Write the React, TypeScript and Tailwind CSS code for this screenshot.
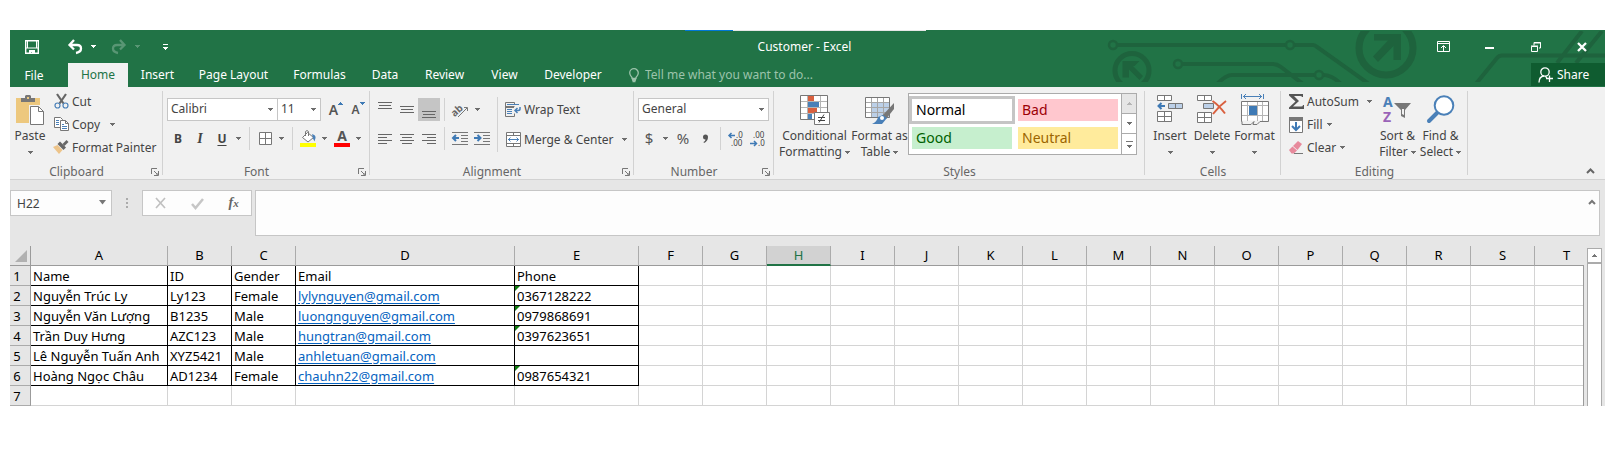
import React from "react";

type Kids = { children?: React.ReactNode };

function Icon({ w, h, children }: { w: number; h: number } & Kids) {
  return (
    <svg width={w} height={h} viewBox={`0 0 ${w} ${h}`} fill="none" className="block shrink-0 overflow-visible" aria-hidden="true">
      {children}
    </svg>
  );
}

function Caret({ className = "text-[#6d6d6d]" }: { className?: string }) {
  return (
    <svg width="5" height="3" viewBox="0 0 5 3" className={`block shrink-0 ${className}`} aria-hidden="true">
      <path d="M0 0h5v1H4v1H3v1H2V2H1V1H0z" fill="currentColor" />
    </svg>
  );
}

function Tool({ label, className, children }: { label: string; className: string } & Kids) {
  return (
    <button type="button" aria-label={label} title={label} className={`flex h-[23px] shrink-0 items-center justify-center ${className}`}>
      {children}
    </button>
  );
}

function Divider({ className = "" }: { className?: string }) {
  return <span className={`w-px shrink-0 bg-[#d2d2d2] ${className}`} />;
}

function Group({ name, width, launcher, children }: { name: string; width: string; launcher?: boolean } & Kids) {
  return (
    <section aria-label={name} className={`relative flex shrink-0 flex-col ${width}`}>
      <div className="flex h-[74px]">{children}</div>
      <div className="flex h-[18px] items-center pt-[3px] text-center text-[12px] leading-4 text-[#666]">
        <h2 className="flex-1">{name}</h2>
        {launcher && (
          <button type="button" aria-label={`${name} settings`} className="w-5 pl-[8px]">
            <Icon w={8} h={8}>
              <path d="M.5 6V.5H6M3 3l3 3M7.5 3v4.5H3M7 5v2H5" stroke="#777" />
            </Icon>
          </button>
        )}
      </div>
      <span className="absolute top-[4px] right-0 bottom-[4px] w-px bg-[#d2d2d2]" />
    </section>
  );
}

function Big({ icon, lines, width }: { icon: React.ReactNode; lines: string[]; width: string }) {
  return (
    <button type="button" className={`flex shrink-0 flex-col items-center pt-[8px] text-[12px] leading-4 whitespace-nowrap text-[#444] ${width}`}>
      <span className="flex h-[33px] items-start">{icon}</span>
      <span>{lines[0]}</span>
      <span className="flex h-4 items-center gap-[3px]">
        {lines[1]}
        <Caret />
      </span>
    </button>
  );
}

function Small({ icon, text, caret, gap = "ml-[4px]" }: { icon: React.ReactNode; text: string; caret?: boolean; gap?: string }) {
  return (
    <button type="button" className="flex h-[23px] items-center text-[12px] whitespace-nowrap text-[#444]">
      <span className="mr-[3px] flex w-4 justify-center">{icon}</span>
      {text}
      {caret && (
        <span className={gap}>
          <Caret />
        </span>
      )}
    </button>
  );
}

function Combo({ label, value, options, className }: { label: string; value: string; options: string[]; className: string }) {
  return (
    <div className={`relative shrink-0 ${className}`}>
      <select aria-label={label} defaultValue={value} className="block h-[23px] w-full appearance-none border border-[#c6c6c6] bg-white pb-[2px] pl-[3px] text-[12px] leading-4 text-[#444]">
        {options.map((o) => (
          <option key={o}>{o}</option>
        ))}
      </select>
      <span className="pointer-events-none absolute top-[10px] right-[5px]">
        <Caret />
      </span>
    </div>
  );
}

/* ---------- icons ---------- */

const PasteIcon = () => (
  <Icon w={28} h={30}>
    <path d="M0 3h24v25H0z" fill="#edc87e" />
    <path d="M5 3h4V1l1-1h4l1 1v2h4v4H5z" fill="#777" />
    <path d="M11 2h2v2h-2z" fill="#edc87e" />
    <path d="M13 10h11v20H13z" fill="#f1f1f1" />
    <path d="M14.500 11.500h8l5 5v13h-13z" fill="#fff" stroke="#777" />
    <path d="M22.500 11.500v5h5" stroke="#777" />
  </Icon>
);

const CutIcon = () => (
  <Icon w={15} h={15}>
    <path d="M3 0l6.500 9.500M12 0L5.500 9.500" stroke="#666" strokeWidth="2.200" />
    <circle cx="3.500" cy="11.500" r="2.500" stroke="#4a80b8" strokeWidth="1.200" />
    <circle cx="11.500" cy="11.500" r="2.500" stroke="#4a80b8" strokeWidth="1.200" />
  </Icon>
);

const CopyIcon = () => (
  <Icon w={15} h={15}>
    <path d="M.5.500h6l2 2v8h-8z" fill="#fff" stroke="#777" />
    <path d="M2 3.500h3M2 5.500h3M2 7.500h3" stroke="#4a80b8" />
    <path d="M6.500 3.500h5l3 3v7h-8z" fill="#fff" stroke="#777" />
    <path d="M11.500 3.500v3h3" stroke="#777" />
    <path d="M8 7.500h2M8 9.500h5M8 11.500h5" stroke="#4a80b8" />
  </Icon>
);

const PainterIcon = () => (
  <Icon w={16} h={15}>
    <path d="M0 7l4.500-2 5 5L6 14z" fill="#edc48a" />
    <path d="M4.500 4l2.500-2.500 6 6-2.500 2.500z" fill="#666" />
    <path d="M10.500 5l4-4" stroke="#666" strokeWidth="2.800" />
  </Icon>
);

const LinesIcon = ({ rows, h = 14 }: { rows: [number, number, number][]; h?: number }) => (
  <Icon w={14} h={h}>
    {rows.map(([x, y, w]) => (
      <rect key={y} x={x} y={y} width={w} height="1" fill="#666" />
    ))}
  </Icon>
);

const BordersIcon = () => (
  <Icon w={13} h={13}>
    <path d="M.5.500h12v12H.5zM6.500 0v13M0 6.500h13" stroke="#777" fill="#fff" />
  </Icon>
);

const FillColorIcon = () => (
  <Icon w={17} h={17}>
    <path d="M2.500 7.500l5-5 6 5-5.500 4.500z" fill="#fff" stroke="#777" />
    <path d="M5.500 6V1.500q1.500-2 3 0V6" stroke="#777" />
    <path d="M12 4q4 1 3.500 4l-1 3.500-1.500-3z" fill="#4a80b8" />
    <path d="M0 13h16v4H0z" fill="#ff0" />
  </Icon>
);

const OrientationIcon = () => (
  <Icon w={17} h={16}>
    <text x="-1" y="12" transform="rotate(-42 5 9)" fontSize="10" fontWeight="bold" fill="#666" fontFamily="Noto Sans, sans-serif">ab</text>
    <path d="M6 15l9-9M15.500 9V5.500H12" stroke="#777" />
  </Icon>
);

const IndentIcon = ({ inc }: { inc?: boolean }) => (
  <Icon w={16} h={13}>
    <path d="M0 .5h16M9 3.500h7M9 6.500h7M9 9.500h7M0 12.500h16" stroke="#777" />
    {inc ? (
      <path d="M0 6h6M3.500 3l3 3-3 3" stroke="#3f7ab5" strokeWidth="2" />
    ) : (
      <path d="M7 6H1M4 3L1 6l3 3" stroke="#3f7ab5" strokeWidth="2" />
    )}
  </Icon>
);

const WrapIcon = () => (
  <Icon w={16} h={16}>
    <path d="M9.500 2V.500h-9v4h9M.5 5.500v9h9v-3M.5 4v2M9 5.500H.5" stroke="#777" />
    <path d="M2 2.500h12M2 7.500h5M2 9.500h5M2 11.500h5" stroke="#4a80b8" />
    <path d="M15 5v2q0 1.500-2 1.500h-3M12.500 6l-2.500 2.500 2.500 2.500" stroke="#4a80b8" strokeWidth="1.500" />
  </Icon>
);

const MergeIcon = () => (
  <Icon w={15} h={15}>
    <path d="M.5.500h14v14H.5zM.5 3.500h14M.5 11.500h14M7.500 0v3.500M7.500 11.500V15" stroke="#777" fill="#fff" />
    <path d="M2 7.500h11M4.500 5.500l-2 2 2 2M10.500 5.500l2 2-2 2" stroke="#4a80b8" />
  </Icon>
);

const DecimalIcon = ({ dec }: { dec?: boolean }) => (
  <Icon w={16} h={14}>
    <g fontSize="8" fontFamily="Noto Sans, sans-serif" fill="#444">
      <text x={dec ? 3 : 8} y="6">{dec ? ".00" : ".0"}</text>
      <text x={dec ? 8 : 3} y="14">{dec ? ".0" : ".00"}</text>
    </g>
    {dec ? (
      <path d="M0 11.500h6M4 9l2.500 2.500L4 14" stroke="#3f7ab5" strokeWidth="1.500" />
    ) : (
      <path d="M7 3.500H1M3.500 1L1 3.500 3.500 6" stroke="#3f7ab5" strokeWidth="1.500" />
    )}
  </Icon>
);

const ConditionalIcon = () => (
  <Icon w={30} h={30}>
    <path d="M.5.500h27v24H.5z" fill="#fff" />
    <path d="M8 1h6v5H8zM8 13h9v5H8z" fill="#d9603f" />
    <path d="M8 19h4v5H8z" fill="#4a80b8" />
    <path d="M0 6.500h28M0 12.500h28M0 18.500h28M7.500 0v25M20.500 0v25" stroke="#b5b5b5" />
    <path d="M8 7h11v5H8z" fill="#4a80b8" />
    <path d="M.5.500h27v24H.5z" stroke="#777" />
    <path d="M14.500 17.500h15v12h-15z" fill="#fff" stroke="#777" />
    <path d="M18 22.500h7M18 25.500h7M24 19.500l-5 8" stroke="#444" />
  </Icon>
);

const TableIcon = () => (
  <Icon w={30} h={30}>
    <path d="M.5 2.500h24v20H.5z" fill="#fff" />
    <path d="M7 8h18v15H7z" fill="#bcd0e8" />
    <path d="M0 7.500h25M0 12.500h25M0 17.500h25M6.500 3v20M12.500 3v20M18.500 3v20" stroke="#a6a6a6" />
    <path d="M.5 2.500h24v20H.5z" stroke="#777" />
    <path d="M29 8v6L21 24l-4-3z" fill="#777" />
    <path d="M18 20l4 3-5 6H7q5-2 6-7z" fill="#4a80b8" />
    <circle cx="17" cy="23" r="2" fill="#fff" />
  </Icon>
);

const InsertCellsIcon = () => (
  <Icon w={26} h={27}>
    <path d="M.5.500h14v5H.5zM7.500.500v5M.5 16.500h14v10H.5zM7.500 16v11M.5 21.500h14" fill="#fff" stroke="#777" />
    <path d="M11.500 8.500h14v5h-14zM18.500 8.500v5" fill="#bcd0e8" stroke="#777" />
    <path d="M8 11H2M4.500 8l-3 3 3 3" stroke="#3f7ab5" strokeWidth="2" />
  </Icon>
);

const DeleteCellsIcon = () => (
  <Icon w={30} h={28}>
    <path d="M.5.500h14v5H.5zM7.500.500v5M.5 17.500h14v10H.5zM7.500 17v11M.5 22.500h14" fill="#fff" stroke="#777" />
    <path d="M6.500 8.500h10v5h-10z" fill="#bcd0e8" stroke="#777" />
    <path d="M15.500 6q6 4 12.500 12.500M29 6q-7 5-13 13" stroke="#d9603f" strokeWidth="2" />
  </Icon>
);

const FormatCellsIcon = () => (
  <Icon w={28} h={31}>
    <path d="M.5-1v5M22.500-1v5M2 1.500h19M5-1L2.500 1.500 5 4M18-1l2.500 2.500L18 4" stroke="#4a80b8" />
    <path d="M.5 6.500h27v19H.5z" fill="#fff" />
    <path d="M0 10.500h28M0 20.500h28M6.500 6v20M16.500 6v20M21.500 6v20" stroke="#b5b5b5" />
    <path d="M.5 6.500h27v20H19l-3 3h-4l1-3-3 3H1v-3H.5z" stroke="#777" />
    <path d="M8 11h8v9H8z" fill="#3f7ab5" />
  </Icon>
);

const SigmaIcon = () => (
  <Icon w={15} h={15}>
    <path d="M0 0h14v3h-1q0-1-2-1H5l5 5-6 5.500h8q2 0 2-1.500h1v4H0v-1.500L6.500 7.500 0 1.500z" fill="#555" />
  </Icon>
);

const FillIcon = () => (
  <Icon w={14} h={16}>
    <path d="M.5.500h13v15H.5z" fill="#fff" stroke="#777" />
    <path d="M0 0h14v4H0z" fill="#777" />
    <path d="M7 5v8M3 9l4 4 4-4" stroke="#3f7ab5" strokeWidth="2" />
  </Icon>
);

const EraserIcon = () => (
  <Icon w={14} h={13}>
    <path d="M0 9l3.500-3.500 4.500 4L5 12.500H2.500z" fill="#e78a9c" />
    <path d="M4 5l5-5 4 3-4.500 6z" fill="#e78a9c" />
    <path d="M5 12.500h9" stroke="#777" />
  </Icon>
);

const SortIcon = () => (
  <Icon w={29} h={28}>
    <g fontSize="14" fontWeight="bold" fontFamily="Noto Sans, sans-serif">
      <text x="0" y="12" fill="#4a80b8">A</text>
      <text x="0" y="27" fill="#9a63b8">Z</text>
    </g>
    <path d="M11 8h17l-6 7v8l-4-2v-6z" fill="#777" />
    <path d="M19 14h2v6l-2-1z" fill="#f1f1f1" />
  </Icon>
);

const FindIcon = () => (
  <Icon w={28} h={28}>
    <path d="M2 26l9-9" stroke="#4a80b8" strokeWidth="4" strokeLinecap="round" />
    <circle cx="17" cy="10.500" r="9.300" fill="#fff" stroke="#4a80b8" strokeWidth="2" />
  </Icon>
);

function Circuit() {
  return (
    <svg width="500" height="51" viewBox="0 0 500 51" fill="none" className="pointer-events-none absolute top-px right-0" aria-hidden="true">
      <g stroke="#1e633d" strokeWidth="4">
        <circle cx="8" cy="14" r="4" strokeWidth="2.500" />
        <path d="M12 14h169M189 14h19q2 0 4 2l52 37" />
        <circle cx="185" cy="14" r="4" strokeWidth="2.500" />
        <circle cx="73" cy="33" r="4" strokeWidth="2.500" />
        <path d="M77 33h91q4 0 8 3l22 17M112 53q9-9 15-9h83M218 44q9 0 18 9" />
        <circle cx="214" cy="44" r="4" strokeWidth="2.500" />
        <circle cx="27" cy="39.500" r="17" strokeWidth="5" />
        <circle cx="281" cy="17" r="27" strokeWidth="7" />
        <path d="M370 54l22-27q2-2.500 5-2.500h103M477 0l-25 32M497 0l-26 32" />
      </g>
      <path d="M17.500 30h17l-5 5h-1.500l10 10-3.500 4L24 38.500v8h-6.500z" fill="#1e633d" />
      <path d="M269 3h27v26h-7.500V15L273 31l-5-5.500 15-16h-14z" fill="#1e633d" />
    </svg>
  );
}

/* ---------- title bar and tabs ---------- */

function TitleBar() {
  return (
    <div className="grid h-[33px] grid-cols-[1fr_auto_1fr] items-center text-white">
      <div className="flex items-center pl-[15px]">
        <button type="button" aria-label="Save">
          <Icon w={14} h={14}>
            <path d="M.7.700h12.600v12.600H.700z" stroke="#fff" strokeWidth="1.400" />
            <path d="M0 7.500h14v1H0zM2 0h1v8H2zM11 0h1v8h-1zM4 10h6v4H7v-2H6v2H4z" fill="#fff" />
          </Icon>
        </button>
        <button type="button" aria-label="Undo" className="ml-[29px]">
          <Icon w={14} h={14}>
            <path d="M1.500 5H9q4 0 4 3.500T8 13M6 0L1.500 5l4.500 4.500" stroke="#fff" strokeWidth="2.300" />
          </Icon>
        </button>
        <button type="button" aria-label="Undo history" className="ml-[9px]">
          <Caret className="text-white" />
        </button>
        <button type="button" aria-label="Redo" className="ml-4 opacity-25">
          <Icon w={14} h={14}>
            <path d="M12.500 5H5Q1 5 1 8.500T6 13M8 0l4.500 5L8 9.500" stroke="#fff" strokeWidth="2.300" />
          </Icon>
        </button>
        <button type="button" aria-label="Redo history" className="ml-[9px] opacity-25">
          <Caret className="text-white" />
        </button>
        <button type="button" aria-label="Customize Quick Access Toolbar" className="ml-[23px]">
          <Icon w={5} h={6}>
            <path d="M0 0h5v1H0zM0 3h5v1H4v1H3v1H2V5H1V4H0z" fill="#fff" />
          </Icon>
        </button>
      </div>
      <h1 className="pr-[6px] text-[12px]">Customer - Excel</h1>
      <div className="flex h-[30px] items-center justify-end pr-[18px]">
        <button type="button" aria-label="Ribbon Display Options">
          <Icon w={13} h={11}>
            <path d="M.5.500h12v10H.5zM.5 2.500h12M6.500 5v5M4 7l2.500-2.500L9 7" stroke="#fff" />
          </Icon>
        </button>
        <button type="button" aria-label="Minimize" className="ml-[35px] pt-[3px]">
          <Icon w={9} h={2}>
            <path d="M0 0h9v2H0z" fill="#fff" />
          </Icon>
        </button>
        <button type="button" aria-label="Restore" className="ml-[37px]">
          <Icon w={10} h={10}>
            <path d="M.5 4.500h6v5h-6zM0 4h7M3 3.500V.500h6.500V6H8M3 1h7" stroke="#fff" />
          </Icon>
        </button>
        <button type="button" aria-label="Close" className="ml-[36px]">
          <Icon w={10} h={10}>
            <path d="M1 1l8 8M9 1L1 9" stroke="#fff" strokeWidth="2.300" />
          </Icon>
        </button>
      </div>
    </div>
  );
}

const tabs: [string, string][] = [
  ["File", "w-[58px] pr-[10px] pt-[2px]"],
  ["Home", "w-[60px]"],
  ["Insert", "w-[59px]"],
  ["Page Layout", "w-[93px]"],
  ["Formulas", "w-[79px]"],
  ["Data", "w-[52px]"],
  ["Review", "w-[67px]"],
  ["View", "w-[53px]"],
  ["Developer", "w-[84px]"],
];

function Tabs() {
  return (
    <nav className="relative flex h-6 items-stretch text-[12px] text-white">
      {tabs.map(([t, w]) => (
        <button key={t} type="button" className={`shrink-0 whitespace-nowrap ${w} ${t === "Home" ? "bg-[#f1f1f1] text-[#217346]" : ""}`}>
          {t}
        </button>
      ))}
      <label className="ml-[14px] flex items-center gap-[6px]">
        <Icon w={10} h={14}>
          <path d="M3 9.500Q.700 7 .700 5a4.300 4.300 0 0 1 8.600 0Q9.300 7 7 9.500v1H3zM3 12h4M3.500 13.500h3" stroke="#9cc3ab" strokeWidth="1.300" />
        </Icon>
        <input aria-label="Tell me" placeholder="Tell me what you want to do..." className="w-[180px] bg-transparent placeholder:text-[#9cc3ab] placeholder:opacity-100" />
      </label>
      <button type="button" className="ml-auto flex h-[23px] w-[74px] items-center gap-1 bg-[#0f5c30] pl-[7px]">
        <Icon w={15} h={16}>
          <circle cx="7" cy="5" r="4.200" stroke="#fff" strokeWidth="1.300" />
          <path d="M1 15.500q0-6 5-6.500M7 9.500l2 1M11.500 8.500V15M8 11.500h7" stroke="#fff" strokeWidth="1.300" />
        </Icon>
        Share
      </button>
    </nav>
  );
}

/* ---------- ribbon ---------- */

function Ribbon() {
  return (
    <div className="flex h-[93px] border-b border-[#d2d2d2] bg-[#f1f1f1]">
      <Group name="Clipboard" width="w-[153px]" launcher>
        <Big icon={<PasteIcon />} lines={["Paste"]} width="w-[40px]" />
        <div className="ml-[3px] flex flex-col pt-[3px]">
          <Small icon={<CutIcon />} text="Cut" />
          <Small icon={<CopyIcon />} text="Copy" caret gap="ml-[10px]" />
          <Small icon={<PainterIcon />} text="Format Painter" />
        </div>
      </Group>

      <Group name="Font" width="w-[207px]" launcher>
        <div className="flex flex-col gap-[6px] pt-[11px] pl-[4px]">
          <div className="flex">
            <Combo label="Font name" value="Calibri" options={["Calibri", "Arial", "Times New Roman"]} className="w-[111px]" />
            <Combo label="Font size" value="11" options={["10", "11", "12", "14"]} className="-ml-px w-[44px]" />
            <Tool label="Increase font size" className="ml-[4px] w-[22px] text-[14px] font-semibold text-[#555]">
              A
              <Caret className="mb-3 rotate-180 text-[#3f7ab5]" />
            </Tool>
            <Tool label="Decrease font size" className="w-[22px] text-[12px] font-semibold text-[#555]">
              A
              <Caret className="mb-3 text-[#3f7ab5]" />
            </Tool>
          </div>
          <div className="flex text-[12px] text-[#444]">
            <Tool label="Bold" className="w-[22px] font-bold">B</Tool>
            <Tool label="Italic" className="w-[22px] font-['Liberation_Serif',serif] text-[14px] font-bold italic">I</Tool>
            <Tool label="Underline" className="w-[22px] font-bold underline underline-offset-2">U</Tool>
            <Tool label="Underline style" className="w-[11px]"><Caret /></Tool>
            <Divider className="mx-[5px]" />
            <Tool label="Borders" className="w-5"><BordersIcon /></Tool>
            <Tool label="Border style" className="w-3"><Caret /></Tool>
            <Divider className="mx-[5px]" />
            <Tool label="Fill color" className="w-5"><FillColorIcon /></Tool>
            <Tool label="Fill color options" className="w-3"><Caret /></Tool>
            <Tool label="Font color" className="ml-[2px] w-5 flex-col">
              <span className="text-[14px] leading-3 font-bold text-[#555]">A</span>
              <span className="mt-px h-1 w-4 bg-[#f00]" />
            </Tool>
            <Tool label="Font color options" className="w-3"><Caret /></Tool>
          </div>
        </div>
      </Group>

      <Group name="Alignment" width="w-[264px]" launcher>
        <div className="flex flex-col gap-[6px] pt-[11px] pl-[4px]">
          <div className="flex">
            <Tool label="Top align" className="w-[22px]"><LinesIcon rows={[[0, 0, 14], [1, 3, 12], [0, 6, 14]]} h={16} /></Tool>
            <Tool label="Middle align" className="w-[22px]"><LinesIcon rows={[[0, 4, 14], [1, 7, 12], [0, 10, 14]]} h={16} /></Tool>
            <Tool label="Bottom align" className="w-[22px] bg-[#c5c5c5]"><LinesIcon rows={[[0, 9, 14], [1, 12, 12], [0, 15, 14]]} h={16} /></Tool>
            <Divider className="mx-1" />
            <Tool label="Orientation" className="w-[22px]"><OrientationIcon /></Tool>
            <Tool label="Orientation options" className="w-3"><Caret /></Tool>
          </div>
          <div className="flex">
            <Tool label="Align left" className="w-[22px]"><LinesIcon rows={[[0, 1, 14], [0, 4, 9], [0, 7, 14], [0, 10, 9]]} h={12} /></Tool>
            <Tool label="Center" className="w-[22px]"><LinesIcon rows={[[0, 1, 14], [2, 4, 10], [0, 7, 14], [2, 10, 10]]} h={12} /></Tool>
            <Tool label="Align right" className="w-[22px]"><LinesIcon rows={[[0, 1, 14], [5, 4, 9], [0, 7, 14], [5, 10, 9]]} h={12} /></Tool>
            <Divider className="mx-1" />
            <Tool label="Decrease indent" className="w-[22px]"><IndentIcon /></Tool>
            <Tool label="Increase indent" className="w-[22px]"><IndentIcon inc /></Tool>
          </div>
        </div>
        <Divider className="mt-[10px] mr-[7px] ml-[4px] h-[55px]" />
        <div className="flex flex-col gap-[7px] pt-[11px]">
          <Small icon={<WrapIcon />} text="Wrap Text" />
          <Small icon={<MergeIcon />} text="Merge & Center" caret gap="ml-[8px]" />
        </div>
      </Group>

      <Group name="Number" width="w-[140px]" launcher>
        <div className="flex flex-col gap-[6px] pt-[11px] pl-[4px]">
          <Combo label="Number format" value="General" options={["General", "Number", "Currency", "Text"]} className="w-[131px]" />
          <div className="flex text-[15px] text-[#555]">
            <Tool label="Accounting format" className="w-[22px]">$</Tool>
            <Tool label="Currency options" className="w-[11px]"><Caret /></Tool>
            <Tool label="Percent style" className="ml-px w-[22px]">%</Tool>
            <Tool label="Comma style" className="w-[22px]">
              <Icon w={5} h={8}><path d="M0 2a2 2 0 0 1 5 0q0 4-4 6l-.500-1Q2.500 6 2.500 4.500 0 4.500 0 2z" fill="#555" /></Icon>
            </Tool>
            <Divider className="mx-1" />
            <Tool label="Increase decimal" className="w-[22px]"><DecimalIcon /></Tool>
            <Tool label="Decrease decimal" className="w-[22px]"><DecimalIcon dec /></Tool>
          </div>
        </div>
      </Group>

      <Group name="Styles" width="w-[371px]">
        <Big icon={<ConditionalIcon />} lines={["Conditional", "Formatting"]} width="w-[73px] ml-[4px]" />
        <Big icon={<TableIcon />} lines={["Format as", "Table"]} width="w-[57px]" />
        <div className="mt-[6px] flex h-[62px] w-[229px] border border-[#ababab] bg-white text-[14px]">
          <div className="grid flex-1 grid-cols-2 gap-[6px] px-[3px] py-[5px]">
            <button type="button" className="bg-white px-[4px] text-left leading-[22px] text-black outline-3 outline-[#c5c5c5]">Normal</button>
            <button type="button" className="bg-[#ffc7ce] px-[4px] text-left leading-[22px] text-[#9c0006]">Bad</button>
            <button type="button" className="bg-[#c6efce] px-[4px] text-left leading-[22px] text-[#006100]">Good</button>
            <button type="button" className="bg-[#ffeb9c] px-[4px] text-left leading-[22px] text-[#9c6500]">Neutral</button>
          </div>
          <div className="grid w-[15px] grid-rows-3 divide-y divide-[#ababab] border-l border-[#ababab]">
            <button type="button" aria-label="Previous styles" className="flex items-center justify-center bg-[#e6e6e6]">
              <Caret className="rotate-180 text-[#b5b5b5]" />
            </button>
            <button type="button" aria-label="Next styles" className="flex items-center justify-center"><Caret /></button>
            <button type="button" aria-label="More styles" className="flex flex-col items-center justify-center gap-[3px]">
              <span className="h-px w-[7px] bg-[#777]" />
              <Caret />
            </button>
          </div>
        </div>
      </Group>

      <Group name="Cells" width="w-[136px]">
        <Big icon={<InsertCellsIcon />} lines={["Insert"]} width="w-[42px] ml-[4px]" />
        <Big icon={<DeleteCellsIcon />} lines={["Delete"]} width="w-[42px]" />
        <Big icon={<FormatCellsIcon />} lines={["Format"]} width="w-[43px]" />
      </Group>

      <Group name="Editing" width="w-[187px]">
        <div className="flex w-[95px] flex-col pt-[3px] pl-[7px]">
          <Small icon={<SigmaIcon />} text="AutoSum" caret gap="ml-[8px]" />
          <Small icon={<FillIcon />} text="Fill" caret />
          <Small icon={<EraserIcon />} text="Clear" caret />
        </div>
        <Big icon={<SortIcon />} lines={["Sort &", "Filter"]} width="w-[43px]" />
        <Big icon={<FindIcon />} lines={["Find &", "Select"]} width="w-[43px]" />
      </Group>

      <button type="button" aria-label="Collapse the ribbon" className="mt-auto mr-[10px] mb-[5px] ml-auto">
        <Icon w={9} h={6}>
          <path d="M1 5l3.500-3.500L8 5" stroke="#666" strokeWidth="2" />
        </Icon>
      </button>
    </div>
  );
}

/* ---------- formula bar ---------- */

function FormulaBar() {
  return (
    <div className="flex items-start pt-[10px] pr-[5px] pb-[10px]">
      <div className="relative">
        <input aria-label="Name box" defaultValue="H22" className="block h-[26px] w-[102px] border border-[#c6c6c6] bg-[#fdfdfd] pl-[6px] text-[12px] text-[#444]" />
        <span className="pointer-events-none absolute top-[10px] right-[6px]">
          <Icon w={7} h={5}><path d="M0 0h7L3.500 4.500z" fill="#777" /></Icon>
        </span>
      </div>
      <span className="mt-2 ml-[14px]">
        <Icon w={2} h={11}><path d="M0 0h2v2H0zM0 4h2v2H0zM0 8h2v2H0z" fill="#ababab" /></Icon>
      </span>
      <div className="ml-[14px] flex h-[26px] w-[110px] items-center justify-around border border-[#c6c6c6] bg-[#fdfdfd]">
        <button type="button" aria-label="Cancel">
          <Icon w={11} h={10}><path d="M1 0l9 10M10 0L1 10" stroke="#c0c0c0" strokeWidth="1.700" /></Icon>
        </button>
        <button type="button" aria-label="Enter">
          <Icon w={13} h={11}><path d="M1 6l3.500 4L12 1" stroke="#c6c6c6" strokeWidth="2.500" /></Icon>
        </button>
        <button type="button" aria-label="Insert function" className="flex items-baseline font-['Liberation_Serif',serif] text-[14px] leading-5 font-bold text-[#666] italic">
          f<span className="text-[11px]">x</span>
        </button>
      </div>
      <div className="relative ml-[3px] flex-1">
        <textarea aria-label="Formula bar" className="block h-[46px] w-full resize-none border border-[#c6c6c6] bg-[#fdfdfd] px-2 text-[12px]" />
        <button type="button" aria-label="Collapse formula bar" className="absolute top-[9px] right-1">
          <Icon w={8} h={6}><path d="M1 5l3-3 3 3" stroke="#777" strokeWidth="2" /></Icon>
        </button>
      </div>
    </div>
  );
}

/* ---------- sheet ---------- */

const columns: [string, string][] = [
  ["A", "w-[137px]"], ["B", "w-[64px]"], ["C", "w-[64px]"], ["D", "w-[219px]"], ["E", "w-[124px]"],
  ..."FGHIJKLMNOPQRST".split("").map((c): [string, string] => [c, "w-[64px]"]),
];

const data: string[][] = [
  ["Name", "ID", "Gender", "Email", "Phone"],
  ["Nguyễn Trúc Ly", "Ly123", "Female", "lylynguyen@gmail.com", "0367128222"],
  ["Nguyễn Văn Lượng", "B1235", "Male", "luongnguyen@gmail.com", "0979868691"],
  ["Trần Duy Hưng", "AZC123", "Male", "hungtran@gmail.com", "0397623651"],
  ["Lê Nguyễn Tuấn Anh", "XYZ5421", "Male", "anhletuan@gmail.com", ""],
  ["Hoàng Ngọc Châu", "AD1234", "Female", "chauhn22@gmail.com", "0987654321"],
  [],
];

function Sheet() {
  return (
    <div className="flex">
      <div className="min-w-0 flex-1 overflow-hidden">
        <table className="w-[1589px] table-fixed border-separate border-spacing-0 text-[13px]">
          <colgroup>
            <col className="w-[21px]" />
            {columns.map(([c, w]) => <col key={c} className={w} />)}
          </colgroup>
          <thead>
            <tr className="h-5">
              <th aria-label="Select all" className="border-r border-b border-[#9b9b9b] p-0">
                <span className="flex justify-end pr-[3px]">
                  <Icon w={12} h={12}><path d="M12 0v12H0z" fill="#b1b1b1" /></Icon>
                </span>
              </th>
              {columns.map(([c]) => (
                <th
                  key={c}
                  scope="col"
                  className={
                    c === "H"
                      ? "border-r border-b-2 border-r-[#ababab] border-b-[#217346] bg-[#d2d2d2] p-0 pb-px leading-4 font-normal text-[#217346]"
                      : "border-r border-b border-r-[#ababab] border-b-[#9b9b9b] p-0 pb-[2px] leading-4 font-normal text-black"
                  }
                >
                  {c}
                </th>
              ))}
            </tr>
          </thead>
          <tbody>
            {data.map((row, r) => (
              <tr key={r} className="h-5">
                <th scope="row" className="border-r border-b border-r-[#9b9b9b] border-b-[#ababab] p-0 pr-[6px] text-center leading-[18px] font-normal text-black">
                  {r + 1}
                </th>
                {columns.map(([c], i) => {
                  const value = row[i];
                  const framed = r < 6 && i < 5;
                  return (
                    <td
                      key={c}
                      className={`relative border-r border-b bg-white p-0 pl-[2px] leading-[18px] whitespace-nowrap text-black ${framed ? "border-black" : "border-[#d4d4d4]"}`}
                    >
                      {i === 4 && r > 0 && value && (
                        <svg width="5" height="5" viewBox="0 0 5 5" className="absolute top-0 left-0" aria-hidden="true">
                          <path d="M0 0h5L0 5z" fill="#107c10" />
                        </svg>
                      )}
                      {i === 3 && r > 0 && value ? (
                        <a href={`mailto:${value}`} className="text-[#0563c1] underline underline-offset-2">{value}</a>
                      ) : (
                        value
                      )}
                    </td>
                  );
                })}
              </tr>
            ))}
          </tbody>
        </table>
      </div>
      <div className="flex w-1 flex-col">
        <span className="h-[19px]" />
        <span className="flex-1 border-l border-[#9b9b9b]" />
      </div>
      <div className="mr-[3px] flex w-[15px] flex-col pt-[2px]">
        <button type="button" aria-label="Scroll up" className="flex h-[15px] items-center justify-center border border-[#ababab] bg-white">
          <Caret className="rotate-180 text-[#777]" />
        </button>
        <div className="flex-1 border border-b-0 border-[#ababab] bg-white" />
      </div>
    </div>
  );
}

export default function App() {
  return (
    <main className="bg-white pt-[30px] pr-[9px] pl-[10px] font-['Noto_Sans','Open_Sans',sans-serif]">
      <div className="overflow-hidden bg-[#e6e6e6]">
        <header className="relative bg-[#217346]">
          <div className="absolute top-0 left-[675px] flex">
            <span className="h-px w-[48px] bg-[#0078d7]" />
            <span className="h-px w-[193px] bg-[#e6e6e6]" />
          </div>
          <Circuit />
          <div className="relative">
            <TitleBar />
            <Tabs />
          </div>
        </header>
        <Ribbon />
        <FormulaBar />
        <Sheet />
      </div>
    </main>
  );
}
